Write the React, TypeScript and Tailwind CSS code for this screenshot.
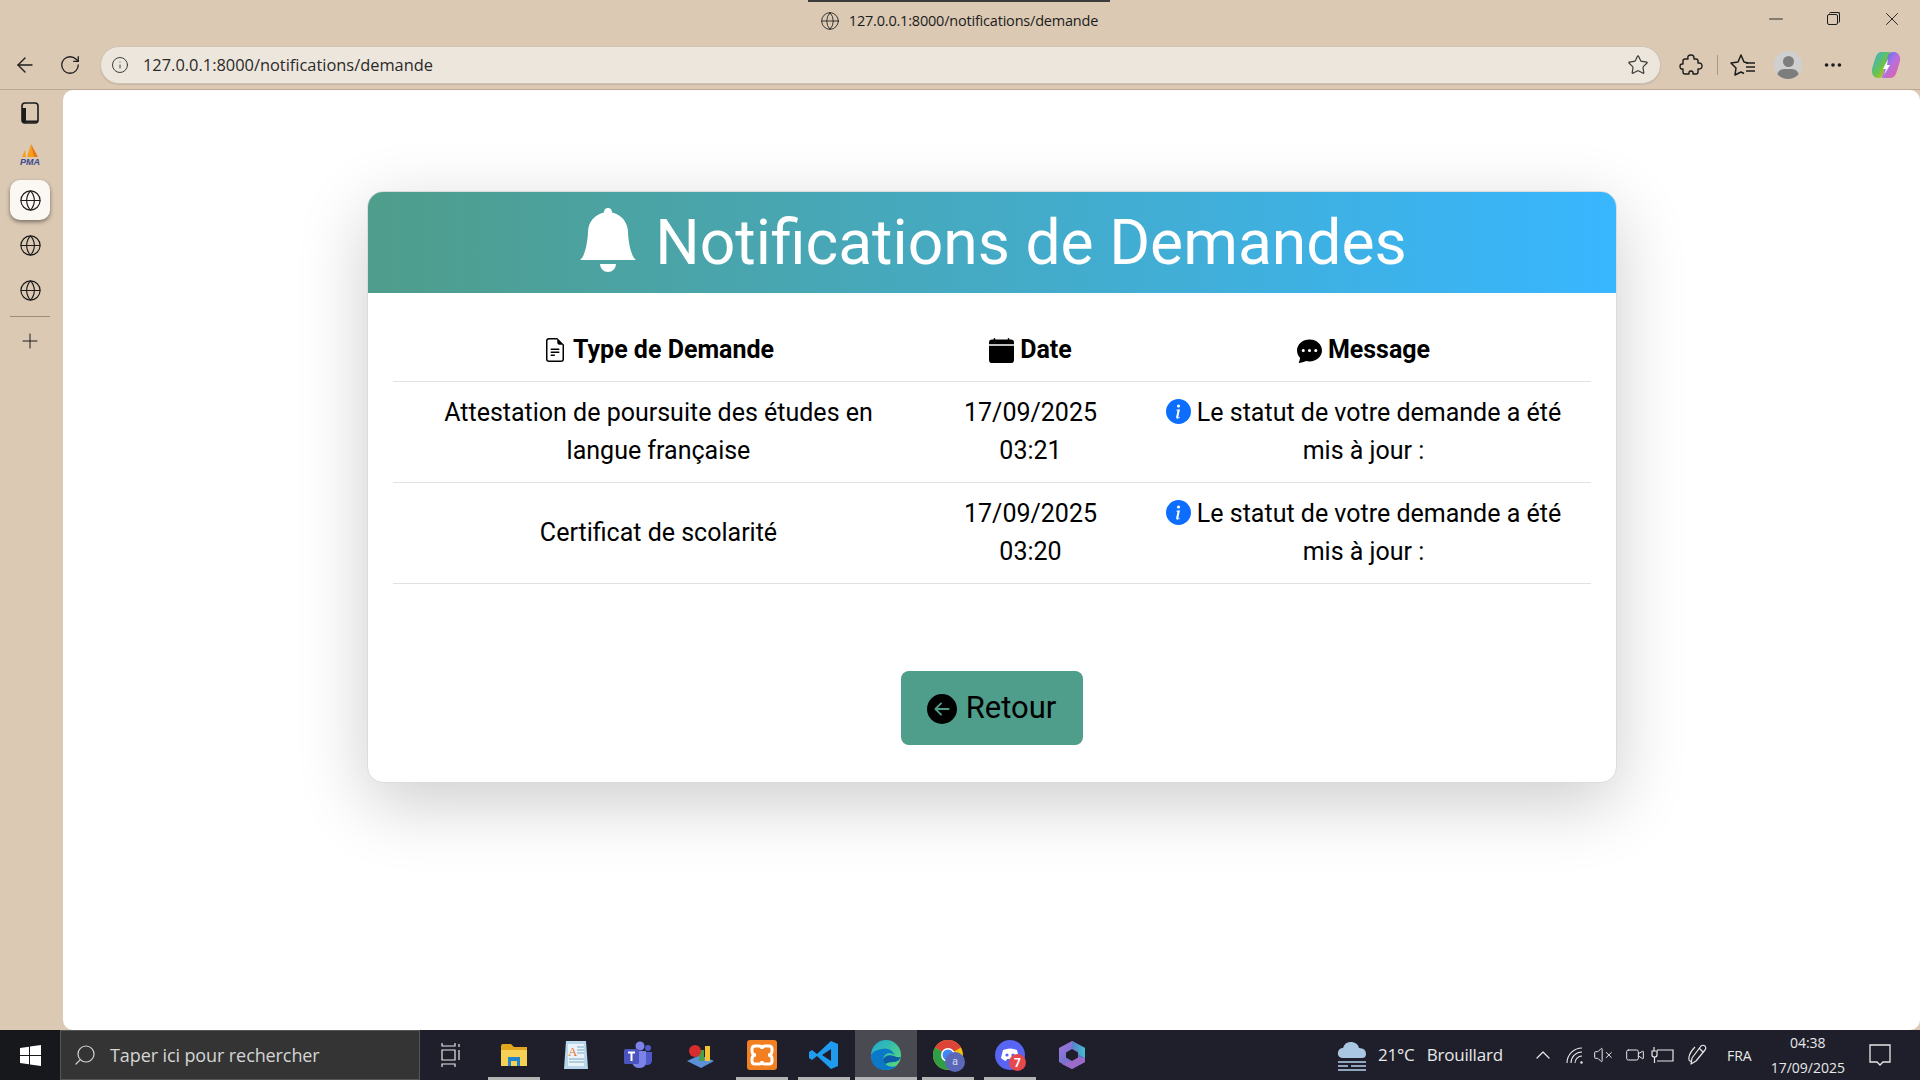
import React from 'react';
import { BsBellFill, BsFileEarmarkText, BsCalendarFill, BsChatDotsFill, BsInfoCircleFill, BsArrowLeftCircleFill } from 'react-icons/bs';
import { ArrowLeft, RotateCw, Info, Star, Ellipsis, Minus, X, Plus, Globe, Search, ChevronUp, VolumeX, Video } from 'lucide-react';

const requests = [
  { type: 'Attestation de poursuite des études en langue française', date: '17/09/2025', time: '03:21' },
  { type: 'Certificat de scolarité', date: '17/09/2025', time: '03:20' },
];

const UI_FONT = "font-['Open_Sans','Noto_Sans',sans-serif]";

const PmaLogo = () => (
  <svg width="24" height="24" viewBox="0 0 24 24">
    <path d="M4 15 L7 8 L8 15Z M9 15 L13 2 L17 15Z" fill="#f89c1c" />
    <path d="M13 2 L16 15 L20 15Z" fill="#e8751a" />
    <text x="2" y="23" fontSize="9" fontWeight="700" fontStyle="italic" fill="#3d4a8f" fontFamily="Liberation Sans, sans-serif">PMA</text>
  </svg>
);

const SidebarToggle = () => (
  <svg width="18" height="22" viewBox="0 0 18 22">
    <rect x="1" y="1" width="16" height="20" rx="3" fill="none" stroke="#1c1c1c" strokeWidth="1.6" />
    <path d="M1 6 H5 V21 H4 Q1 21 1 18Z" fill="#1c1c1c" />
    <path d="M5 19.500 H17" stroke="#1c1c1c" strokeWidth="2" />
  </svg>
);

const ExtensionIcon = () => (
  <svg width="24" height="24" viewBox="0 0 24 24" fill="none" stroke="#1c1c1c" strokeWidth="1.4" strokeLinejoin="round">
    <path d="M4 8 Q4 6 6 6 H9 Q8 2 12 2 Q15.500 2 15 6 H17 Q19 6 19 8 V10 Q23 9.500 23 13 Q23 16.500 19 16 V19 Q19 21 17 21 H14 Q14.500 18 12 18 Q9.500 18 10 21 H6 Q4 21 4 19 V16 Q1 16.500 1 13.500 Q1 10.500 4 11Z" />
  </svg>
);

const FavoritesIcon = () => (
  <svg width="26" height="24" viewBox="0 0 26 24" fill="none" stroke="#1c1c1c" strokeWidth="1.5" strokeLinejoin="round">
    <path d="M18 10 L14 9 L11 2 L8 9 L1 10 L6 15 L5 22 L11 19 L14 20.500" />
    <path d="M16 10 H25 M16 14 H25 M16 18 H25" />
  </svg>
);

const Copilot = () => (
  <svg width="30" height="30" viewBox="0 0 30 30">
    <defs>
      <linearGradient id="cp1" x1="0" y1="0" x2="1" y2="1">
        <stop offset="0" stopColor="#2fb4e8" />
        <stop offset="0.55" stopColor="#6cc24a" />
        <stop offset="1" stopColor="#f5c21b" />
      </linearGradient>
      <linearGradient id="cp2" x1="0" y1="0" x2="1" y2="1">
        <stop offset="0" stopColor="#3a7bea" />
        <stop offset="0.5" stopColor="#b66fe0" />
        <stop offset="1" stopColor="#ef5f8e" />
      </linearGradient>
    </defs>
    <path d="M10 2 H19 L13 24 Q12 28 8 28 H6 Q0 26 1 19 L4 9 Q6 2 10 2Z" fill="url(#cp1)" />
    <path d="M20 28 H11 L17 6 Q18 2 22 2 H24 Q30 4 29 11 L26 21 Q24 28 20 28Z" fill="url(#cp2)" />
    <path d="M17 9 L12 19 H15 L13 25 L19 15 H16Z" fill="#fff" />
  </svg>
);

const Explorer = () => (
  <svg width="28" height="28" viewBox="0 0 28 28">
    <path d="M1 5 Q1 3 3 3 H11 L14 6 H27 V25 H1Z" fill="#e2a61f" />
    <rect x="1" y="9" width="26" height="16" fill="#f7d154" />
    <rect x="8" y="16" width="12" height="9" fill="#1f86c9" />
    <rect x="11" y="20" width="6" height="5" fill="#f7d154" />
  </svg>
);

const NotesApp = () => (
  <svg width="26" height="32" viewBox="0 0 26 32">
    <path d="M3 2 H23 L25 30 H1Z" fill="#b7d6ea" />
    <rect x="5" y="5" width="16" height="22" fill="#e8f2f8" />
    <text x="5" y="17" fontSize="13" fill="#e8762d" fontFamily="Liberation Serif, serif">A</text>
    <path d="M14 8 H21 M14 11 H21 M14 14 H21 M6 20 H21 M6 23 H21" stroke="#7ba7c4" strokeWidth="1" />
  </svg>
);

const Teams = () => (
  <svg width="30" height="30" viewBox="0 0 30 30">
    <circle cx="17" cy="6" r="4.5" fill="#7b83eb" />
    <circle cx="25" cy="8" r="3" fill="#5059c9" />
    <path d="M20 12 H29 V20 Q29 25 24 25 Q21 25 20 23Z" fill="#5059c9" />
    <path d="M9 11 H23 V22 Q23 28 16 28 Q11 28 9 23Z" fill="#7b83eb" />
    <rect x="1" y="9" width="15" height="15" rx="1.5" fill="#4b53bc" />
    <path d="M5 12.5 H12 M8.5 12.5 V21" stroke="#fff" strokeWidth="2" />
  </svg>
);

const Pile = () => (
  <svg width="30" height="30" viewBox="0 0 30 30">
    <path d="M2 21 L15 15 L29 21 L16 28Z" fill="#5b8fd8" />
    <rect x="20" y="6" width="5" height="15" fill="#f2c230" />
    <rect x="14" y="10" width="5" height="11" fill="#46a04a" />
    <circle cx="10" cy="11" r="6" fill="#d92d2d" />
  </svg>
);

const Xampp = () => (
  <svg width="30" height="30" viewBox="0 0 30 30">
    <rect width="30" height="30" rx="3" fill="#f27f22" />
    <path d="M8 6 H12 Q15 6 15 9 Q15 6 18 6 H22 Q25 6 25 9 V11 Q25 15 21 15 Q25 15 25 19 V21 Q25 24 22 24 H18 Q15 24 15 21 Q15 24 12 24 H8 Q5 24 5 21 V19 Q5 15 9 15 Q5 15 5 11 V9 Q5 6 8 6Z" fill="none" stroke="#fff" strokeWidth="3" />
  </svg>
);

const VsCode = () => (
  <svg width="30" height="30" viewBox="0 0 30 30">
    <path d="M22 1 L29 4 V26 L22 29 L8 16 L3 20 L0 18 V12 L3 10 L8 14Z M22 9 L13 15 L22 21Z" fill="#1f9cf0" fillRule="evenodd" />
  </svg>
);

const Edge = () => (
  <svg width="30" height="30" viewBox="0 0 30 30">
    <defs>
      <linearGradient id="edgeTop" x1="0" y1="0" x2="1" y2="1">
        <stop offset="0" stopColor="#1ba6d8" />
        <stop offset="1" stopColor="#5fe06c" />
      </linearGradient>
    </defs>
    <circle cx="15" cy="15" r="15" fill="url(#edgeTop)" />
    <path d="M0 15 Q0 30 15 30 Q22 30 26 26 Q18 28 14 24 Q10 20 14 15 Q18 11 24 15 Q19 7 11 9 Q3 10 0 15Z" fill="#0c78c8" />
    <path d="M14 24 Q10 20 14 17 Q17 14 23 16 Q27 18 30 17 Q28 22 22 22 Q18 22 14 24Z" fill="#0d5ca8" />
  </svg>
);

const Chrome = () => (
  <span className="relative flex h-[30px] w-[30px]">
    <svg width="30" height="30" viewBox="0 0 30 30">
      <circle cx="15" cy="15" r="15" fill="#f4c20d" />
      <path d="M15 15 L2 7.5 A15 15 0 0 1 28 7.5Z" fill="#db4437" />
      <path d="M15 15 L2 7.5 A15 15 0 0 0 15 30Z" fill="#2f9e44" />
      <circle cx="15" cy="15" r="7" fill="#fff" />
      <circle cx="15" cy="15" r="5.5" fill="#4285f4" />
    </svg>
    <span className="absolute -bottom-[2px] -right-[2px] flex h-5 w-5 items-center justify-center rounded-full bg-[#5b68b8] text-[11px] text-[#d5d8ee] font-['Roboto',sans-serif]">a</span>
  </span>
);

const Discord = () => (
  <span className="relative flex h-[30px] w-[30px]">
    <svg width="30" height="30" viewBox="0 0 30 30">
      <circle cx="15" cy="15" r="15" fill="#5865f2" />
      <path d="M8 10 Q15 7 22 10 L24 18 Q21 21 19 21 L18 19 H12 L11 21 Q9 21 6 18Z" fill="#fff" />
      <circle cx="12" cy="15" r="1.6" fill="#5865f2" />
      <circle cx="18" cy="15" r="1.6" fill="#5865f2" />
    </svg>
    <span className="absolute -bottom-[1px] -right-[1px] flex h-[17px] w-[17px] items-center justify-center rounded-full bg-[#e5484d] text-[12px] font-bold text-white font-['Roboto',sans-serif]">7</span>
  </span>
);

const M365 = () => (
  <svg width="28" height="30" viewBox="0 0 28 30">
    <defs>
      <linearGradient id="m3651" x1="0" y1="0" x2="1" y2="1">
        <stop offset="0" stopColor="#a678dc" />
        <stop offset="1" stopColor="#3d6fc4" />
      </linearGradient>
      <linearGradient id="m3652" x1="0" y1="0" x2="1" y2="0">
        <stop offset="0" stopColor="#5a7fd0" />
        <stop offset="1" stopColor="#3fc0c8" />
      </linearGradient>
    </defs>
    <path d="M14 1 L27 8 V22 L14 29 L1 22 V8Z" fill="url(#m3651)" />
    <path d="M14 1 L27 8 V18 L20 14 V11 L14 8 Z" fill="url(#m3652)" />
    <path d="M27 22 L14 29 L4 24 L14 20 L20 17 L27 18Z" fill="#9a6bc8" />
    <path d="M14 9 L20 12.5 V17.5 L14 21 L8 17.5 V12.5Z" fill="#1e1f2b" />
  </svg>
);

const Weather = () => (
  <svg width="32" height="36" viewBox="0 0 32 36">
    <path d="M6 21 Q1 20 2 15 Q3 11 7 11 Q9 4 16 5 Q22 6 23 11 Q30 11 30 17 Q30 21 26 21Z" fill="#a9c7e2" />
    <path d="M2 25 H30 M2 29 H12 M15 29 H30 M2 33 H30" stroke="#8fa7bd" strokeWidth="2" />
  </svg>
);

const WifiTray = () => (
  <svg width="20" height="20" viewBox="0 0 20 20" fill="none" stroke="#e8e8e8" strokeWidth="1.1">
    <path d="M10 18 A7 7 0 0 1 17 11 M6 18 A11 11 0 0 1 17 7 M2 18 A15 15 0 0 1 17 3" />
    <circle cx="16.500" cy="17.500" r="1.200" fill="#e8e8e8" stroke="none" />
  </svg>
);

const BatteryTray = () => (
  <svg width="24" height="20" viewBox="0 0 24 20" fill="none" stroke="#e8e8e8" strokeWidth="1.2">
    <path d="M7 5 H23 V16 H7 M4 2 V6 M2 6 H7 V10 Q7 12 4.500 12 Q2 12 2 10Z M4.500 12 V18" />
  </svg>
);

const PenTray = () => (
  <svg width="22" height="22" viewBox="0 0 22 22" fill="none" stroke="#e8e8e8" strokeWidth="1.2" strokeLinejoin="round">
    <path d="M14 2 Q16 0.500 18 2 Q19.500 4 18 6 L9 17 L4 20 L5 14Z" />
    <path d="M12 4 L16 8 M8 3 Q3 8 2 13 Q1 18 5 17" />
  </svg>
);

const NotifTray = () => (
  <svg width="24" height="24" viewBox="0 0 24 24" fill="none" stroke="#e8e8e8" strokeWidth="1.3">
    <path d="M2 2 H22 V19 H15 L12 22 L9 19 H2Z" />
  </svg>
);

const taskbarApps = [
  { key: 'explorer', icon: <Explorer />, running: true },
  { key: 'notes', icon: <NotesApp />, running: false },
  { key: 'teams', icon: <Teams />, running: false },
  { key: 'pile', icon: <Pile />, running: false },
  { key: 'xampp', icon: <Xampp />, running: true },
  { key: 'vscode', icon: <VsCode />, running: true },
  { key: 'edge', icon: <Edge />, running: true, active: true },
  { key: 'chrome', icon: <Chrome />, running: true },
  { key: 'discord', icon: <Discord />, running: true },
  { key: 'm365', icon: <M365 />, running: false },
];

const BrowserTop = () => (
  <div className={`h-[90px] shrink-0 bg-[#dbc9b4] border-b border-[#b9a995] text-[#1c1c1c] ${UI_FONT}`}>
    <div className="flex h-[46px]">
      <div className="w-[808px]" />
      <div className="flex h-[45px] w-[302px] items-center justify-center gap-[9px] border-t-2 border-[#3c3c3c] pb-[6px] text-[14.5px] tracking-[-0.2px]">
        <Globe size={20} strokeWidth={1} />
        <span>127.0.0.1:8000/notifications/demande</span>
      </div>
      <div className="flex flex-1 items-start justify-end pt-[8px] pr-[17px]">
        <Minus size={22} strokeWidth={1} className="mr-[35px]" />
        <div className="mr-[37px] relative h-[22px] w-[22px]">
          <div className="absolute left-[5px] top-[6px] h-[11px] w-[11px] rounded-[2px] border border-[#1c1c1c]" />
          <div className="absolute left-[7px] top-[4px] h-[11px] w-[11px] rounded-[2px] border-t border-r border-[#1c1c1c]" />
        </div>
        <X size={22} strokeWidth={1} />
      </div>
    </div>
    <div className="flex h-[38px] items-center">
      <div className="flex w-[100px] items-center pl-[13px]">
        <ArrowLeft size={24} strokeWidth={1.4} />
        <RotateCw size={22} strokeWidth={1.4} className="ml-[22px]" />
      </div>
      <div className="flex h-[38px] w-[1561px] items-center rounded-full border border-[#cfc4b4] bg-[#ede6dc] pl-[10px] pr-[11px] shadow-[0_1px_1px_rgba(0,0,0,0.1)]">
        <Info size={18} strokeWidth={1.3} className="text-[#3a3a3a]" />
        <span className="ml-[14px] flex-1 text-[16.400px] text-[#2a2a2a]">127.0.0.1:8000/notifications/demande</span>
        <Star size={22} strokeWidth={1.3} className="text-[#3a3a3a]" />
      </div>
      <div className="flex flex-1 items-center">
        <span className="ml-[18px] flex"><ExtensionIcon /></span>
        <div className="ml-[14px] h-[20px] w-px bg-[#a99a88]" />
        <span className="ml-[12px] flex"><FavoritesIcon /></span>
        <div className="relative ml-[18px] flex h-7 w-7 items-center justify-center overflow-hidden rounded-full bg-[#cfcfcf]">
          <div className="absolute top-[5px] h-[11px] w-[11px] rounded-full bg-[#7d7d7d]" />
          <div className="absolute top-[18px] h-[14px] w-[22px] rounded-full bg-[#7d7d7d]" />
        </div>
        <Ellipsis size={22} strokeWidth={2} className="ml-[20px]" />
        <span className="ml-[27px] flex"><Copilot /></span>
      </div>
    </div>
  </div>
);

const SideBar = () => (
  <div className="flex w-[63px] shrink-0 flex-col items-center bg-[#dbc9b4] pt-[11px] pr-[3px] text-[#1c1c1c]">
    <div className="flex h-6 items-center justify-center"><SidebarToggle /></div>
    <div className="mt-[14px] flex h-[30px] items-center justify-center"><PmaLogo /></div>
    <div className="mt-[11px] flex h-10 w-10 items-center justify-center rounded-[10px] bg-[#fbf8f4] shadow-[0_2px_4px_rgba(0,0,0,0.45)]"><Globe size={23} strokeWidth={1.2} /></div>
    <div className="mt-[14px] flex h-[23px] items-center"><Globe size={23} strokeWidth={1.2} /></div>
    <div className="mt-[22px] flex h-[23px] items-center"><Globe size={23} strokeWidth={1.2} /></div>
    <div className="mt-[14px] h-px w-10 bg-[#9a8d7d]" />
    <div className="mt-[12px]"><Plus size={24} strokeWidth={1} /></div>
  </div>
);

const NotificationCard = () => (
  <div className="mx-auto mt-[101px] w-[1250px] overflow-hidden rounded-[16px] border border-[#dcdcdc] bg-white font-['Roboto',sans-serif] text-black shadow-[0_20px_70px_rgba(0,0,0,0.2)]">
    <div className="flex h-[101px] items-center justify-center gap-[15px] bg-gradient-to-r from-[#4f9d8b] to-[#38b6ff] text-white">
      <BsBellFill size={64} className="mb-[5px]" />
      <h1 className="pt-[2px] text-[62.400px] font-normal leading-none">Notifications de Demandes</h1>
    </div>
    <div className="px-[25px] pt-[26px] text-center text-[25px] leading-[38px]">
      <div className="grid grid-cols-[532px_212px_454px] border-b border-[#dee2e6] py-[12px] font-bold">
        <div className="flex items-center justify-center gap-[6px]"><BsFileEarmarkText size={24} /> Type de Demande</div>
        <div className="flex items-center justify-center gap-[6px]"><BsCalendarFill size={25} /> Date</div>
        <div className="flex items-center justify-center gap-[6px]"><BsChatDotsFill size={25} /> Message</div>
      </div>
      {requests.map((r) => (
        <div key={r.time} className="grid grid-cols-[532px_212px_454px] items-center border-b border-[#dee2e6] py-[12px]">
          <div className="px-[12px]">{r.type}</div>
          <div className="px-[12px]">{r.date}<br />{r.time}</div>
          <div className="px-[12px]">
            <BsInfoCircleFill size={25} className="mr-[6px] inline-block -translate-y-[3px] align-middle text-[#0d6efd]" />
            Le statut de votre demande a été mis à jour :
          </div>
        </div>
      ))}
    </div>
    <div className="flex justify-center pt-[87px] pb-[37px]">
      <button className="flex h-[74px] w-[182px] items-center justify-center gap-[9px] rounded-[8px] bg-[#4f9d8b] pt-[1px] text-[31px] text-black">
        <BsArrowLeftCircleFill size={30} /> Retour
      </button>
    </div>
  </div>
);

const Taskbar = () => (
  <div className={`flex h-[50px] shrink-0 items-stretch bg-[#1e1f2b] text-[#e8e8e8] ${UI_FONT}`}>
    <div className="flex w-[60px] items-center justify-center bg-[#17181c]">
      <svg width="21" height="21" viewBox="0 0 21 21" fill="#fff">
        <path d="M0 3 L9 1.7 V10 H0Z M10 1.5 L21 0 V10 H10Z M0 11 H9 V19.3 L0 18Z M10 11 H21 V21 L10 19.5Z" />
      </svg>
    </div>
    <div className="flex w-[360px] items-center gap-[13px] border border-[#555] bg-[#343434] pl-[12px] text-[#d4d4d4]">
      <Search size={24} strokeWidth={1.2} className="-scale-x-100" />
      <span className="text-[18px] tracking-[-0.1px]">Taper ici pour rechercher</span>
    </div>
    <div className="flex w-[63px] items-center justify-center pr-[2px]">
      <svg width="20" height="24" viewBox="0 0 20 24" fill="none" stroke="#e8e8e8" strokeWidth="1.2">
        <path d="M1 0 V3 H14 V0 M1 24 V21 H14 V24 M1 7 H14 V17 H1Z M18 1 V4 M18 7 V17" />
      </svg>
    </div>
    {taskbarApps.map((app) => (
      <div key={app.key} className={`relative flex w-[62px] items-center justify-center ${app.active ? 'bg-[#4a4a52]' : ''}`}>
        {app.icon}
        {app.running && (
          <div className={`absolute bottom-0 h-[3px] bg-[#b4b4b4] ${app.active ? 'inset-x-0' : 'inset-x-[5px]'}`} />
        )}
      </div>
    ))}
    <div className="flex flex-1 items-center pl-[233px]">
      <Weather />
      <span className="ml-[10px] text-[17px] tracking-[-0.2px]">21°C</span>
      <span className="ml-[12px] text-[17px] tracking-[-0.2px]">Brouillard</span>
      <ChevronUp size={24} strokeWidth={1.2} className="ml-[28px]" />
      <span className="ml-[10px] flex"><WifiTray /></span>
      <VolumeX size={20} strokeWidth={1.2} className="ml-[8px]" />
      <Video size={20} strokeWidth={1.2} className="ml-[12px]" />
      <span className="ml-[5px] flex"><BatteryTray /></span>
      <span className="ml-[13px] flex"><PenTray /></span>
      <span className="ml-[18px] text-[14px]">FRA</span>
      <div className="ml-[19px] flex flex-col items-center text-[14px] leading-[25px]">
        <span>04:38</span>
        <span>17/09/2025</span>
      </div>
      <span className="ml-[23px] flex"><NotifTray /></span>
    </div>
  </div>
);

const App: React.FC = () => {
  return (
    <div className="flex h-[1080px] w-[1920px] flex-col overflow-hidden bg-[#dbc9b4]">
      <BrowserTop />
      <div className="flex min-h-0 flex-1">
        <SideBar />
        <div className="flex-1 overflow-hidden rounded-[10px] bg-white">
          <NotificationCard />
        </div>
      </div>
      <Taskbar />
    </div>
  );
};

export default App;
